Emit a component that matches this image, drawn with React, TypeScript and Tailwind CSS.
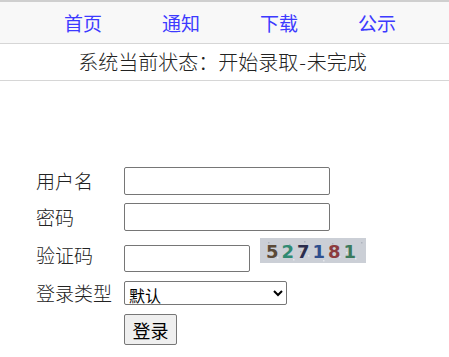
import React from "react";

const navItems = ["首页", "通知", "下载", "公示"];

const digits = [
  { ch: "5", color: "#5b4a38", x: 6 },
  { ch: "2", color: "#2f8a72", x: 21.5 },
  { ch: "7", color: "#2b2d4c", x: 37 },
  { ch: "1", color: "#2f4f8e", x: 52.5 },
  { ch: "8", color: "#8c3b3e", x: 68 },
  { ch: "1", color: "#3c7a5c", x: 83.5 },
];

// a few fixed specks so the captcha looks noisy
const specks = [
  [8, 4], [17, 19], [29, 6], [33, 21], [44, 3], [48, 17], [58, 9], [63, 22],
  [72, 5], [79, 18], [88, 8], [95, 20], [101, 4], [13, 12], [40, 13], [86, 14],
];

function Captcha() {
  return (
    <svg width="106" height="25" viewBox="0 0 106 25" className="block">
      <rect width="106" height="25" fill="#cbcfd6" />
      {specks.map(([x, y], i) => (
        <rect key={i} x={x} y={y} width="1.5" height="1.5" fill={i % 2 ? "#e4e6ea" : "#aeb3bd"} />
      ))}
      {digits.map((d, i) => (
        <text
          key={i}
          x={d.x}
          y="20"
          fill={d.color}
          fontFamily="'DejaVu Sans', sans-serif"
          fontSize="18"
          fontWeight="700"
        >
          {d.ch}
        </text>
      ))}
    </svg>
  );
}

export default function App() {
  return (
    <div className="min-h-[357px] bg-white font-['Noto_Sans_CJK_SC',sans-serif] font-light text-[#222]">
      {/* Nav bar */}
      <div className="flex h-[44px] items-center gap-[60px] border-t-2 border-b border-t-[#cfcfcf] border-b-[#d6d6d6] bg-[#f8f8f8] pl-[64px]">
        {navItems.map((item) => (
          <a key={item} href="#" className="text-[19px] font-normal leading-none text-[#3d3aff]">
            {item}
          </a>
        ))}
      </div>

      {/* Status */}
      <div className="flex h-[37px] items-center justify-center border-b border-[#d6d6d6] pr-[4px] text-[20px]">
        系统当前状态：开始录取<span className="px-[1px]">-</span>未完成
      </div>

      {/* Login form */}
      <div className="pl-[36px]">
        <div className="mt-[84px] flex h-[32px] items-center">
          <span className="w-[88px] text-[19px] leading-[26px]">用户名</span>
          <input className="h-[28px] w-[206px] rounded-[2px] border border-[#767676] bg-white px-1" />
        </div>

        <div className="mt-[2px] flex h-[36px] items-center">
          <span className="w-[88px] text-[19px] leading-[26px]">密码</span>
          <input type="password" className="h-[28px] w-[206px] rounded-[2px] border border-[#767676] bg-white px-1" />
        </div>

        <div className="flex h-[42px] items-start">
          <span className="mt-[7px] w-[88px] text-[19px] leading-[26px]">验证码</span>
          <input className="mt-[10px] h-[27px] w-[126px] rounded-[2px] border border-[#767676] bg-white px-1" />
          <div className="ml-[10px] mt-[3px]">
            <Captcha />
          </div>
        </div>

        <div className="mt-[2px] flex h-[28px] items-center">
          <span className="w-[88px] text-[19px] leading-[26px]">登录类型</span>
          <select className="h-[24px] w-[163px] rounded-[2px] border border-[#767676] bg-white text-[16px] font-normal leading-none text-black">
            <option>默认</option>
          </select>
        </div>

        <div className="mt-[7px] pl-[88px]">
          <button className="h-[31px] w-[53px] rounded-[2px] border border-[#767676] bg-[#efefef] text-[18px] font-normal leading-none text-black">
            登录
          </button>
        </div>
      </div>
    </div>
  );
}
